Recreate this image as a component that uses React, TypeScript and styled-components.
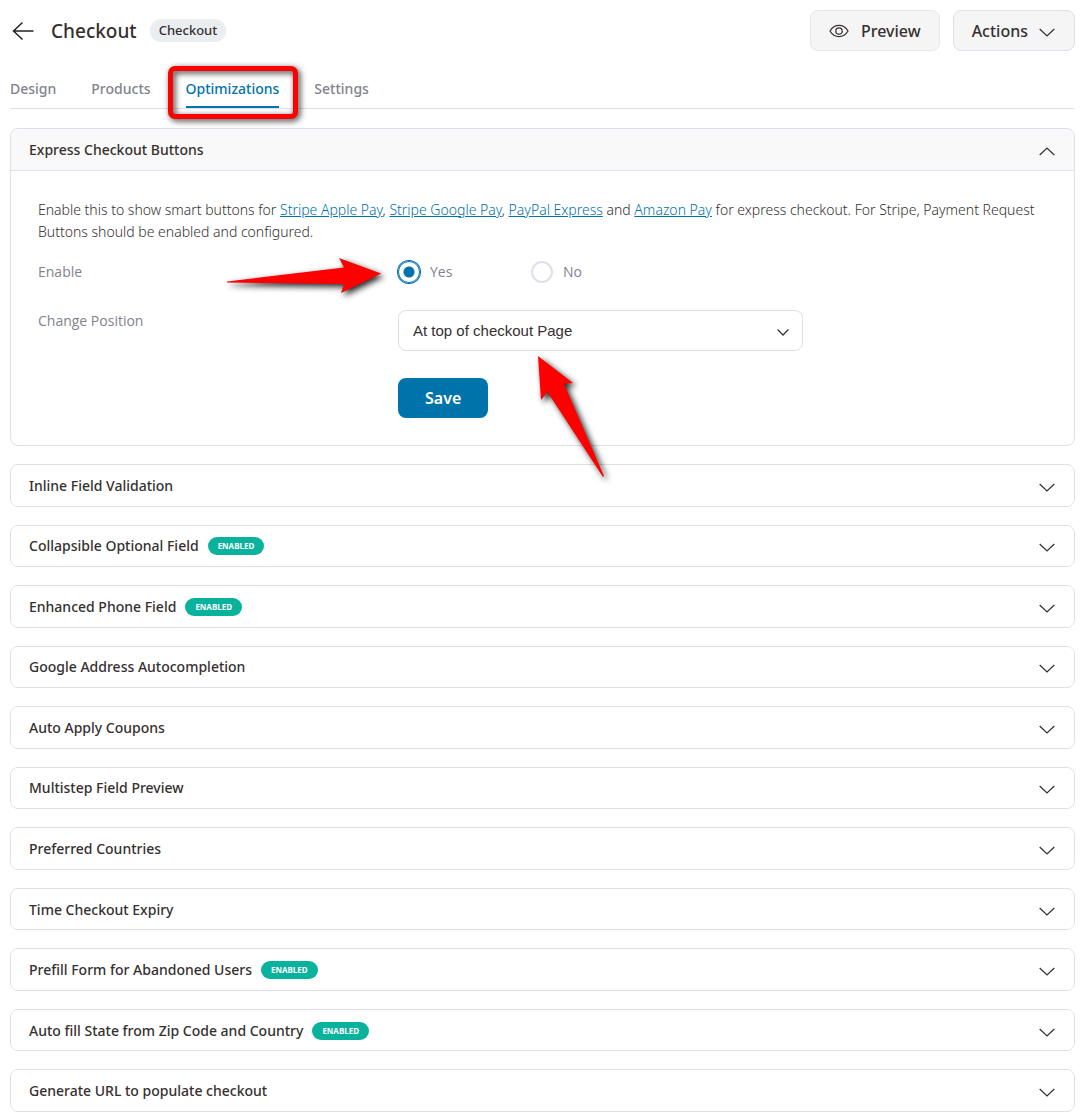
import React, { useState } from "react";
import styled, { createGlobalStyle } from "styled-components";

const c = {
  text: "#353030",
  muted: "#82838e",
  border: "#dedfea",
  blue: "#0073aa",
  green: "#09b29c",
  red: "#ff0000",
};

const GlobalStyle = createGlobalStyle`
  *, *::before, *::after { box-sizing: border-box; }
  body { margin: 0; background: #fff; }
  body, button { font-family: "Noto Sans", "Open Sans", sans-serif; color: ${c.text}; }
`;

const Page = styled.main`
  display: flex;
  flex-direction: column;
  min-height: 100vh;
  padding: 10px 9px 8px 10px;
`;

const Header = styled.header`
  display: flex;
  align-items: center;
  justify-content: space-between;
`;

const TitleGroup = styled.div`
  display: flex;
  align-items: center;
`;

const BackButton = styled.button`
  display: flex;
  padding: 0;
  margin: 0 17px 0 2px;
  border: 0;
  background: none;
`;

const Title = styled.h1`
  margin: 0 13px 0 0;
  font-size: 19px;
  line-height: 26px;
  font-weight: 500;
`;

const Tag = styled.span`
  padding: 0 9px;
  border-radius: 12px;
  background: #eaeef1;
  font-size: 13px;
  line-height: 23px;
  font-weight: 500;
`;

const Toolbar = styled.div`
  display: flex;
  gap: 13px;
`;

const ToolButton = styled.button<{ $tint?: boolean }>`
  display: flex;
  align-items: center;
  gap: ${(p) => (p.$tint ? 11 : 12)}px;
  height: 41px;
  padding: ${(p) => (p.$tint ? "0 19px 0 18px" : "0 18px")};
  border: 1px solid ${(p) => (p.$tint ? c.border : "#e7e7ea")};
  border-radius: 8px;
  background: #f5f5f5;
  font-size: 16px;
  font-weight: 500;
`;

const Tabs = styled.nav`
  display: flex;
  gap: 35px;
  margin: 25px 0 19px;
  border-bottom: 1px solid ${c.border};
`;

const Tab = styled.a<{ $active?: boolean }>`
  position: relative;
  height: 32px;
  border-bottom: 2px solid ${(p) => (p.$active ? c.blue : "transparent")};
  color: ${(p) => (p.$active ? c.blue : c.muted)};
  font-size: 14px;
  line-height: 26px;
  font-weight: 500;
  text-decoration: none;
`;

const Highlight = styled.span`
  position: absolute;
  inset: -10px -19px -13px -18px;
  border: 5px solid ${c.red};
  border-radius: 7px;
  filter: drop-shadow(2px 2px 3px rgba(0, 0, 0, 0.8));
  pointer-events: none;
`;

const Sections = styled.div`
  flex: 1;
  display: grid;
  grid-template-rows: auto;
  grid-auto-rows: minmax(42px, 1fr);
  gap: 18px;
`;

const Panel = styled.section`
  display: flex;
  flex-direction: column;
  border: 1px solid ${c.border};
  border-radius: 8px;
`;

const PanelHeader = styled.button<{ $open?: boolean }>`
  flex: 1 0 auto;
  display: flex;
  align-items: center;
  gap: 9px;
  min-height: ${(p) => (p.$open ? 42 : 40)}px;
  padding: ${(p) => (p.$open ? 0 : 1)}px 19px 0 18px;
  border: 0;
  border-bottom: ${(p) => (p.$open ? `1px solid ${c.border}` : "0")};
  border-radius: ${(p) => (p.$open ? "7px 7px 0 0" : "7px")};
  background: ${(p) => (p.$open ? "#f9f9f9" : "#fff")};
  font-size: 14px;
  line-height: 20px;
  font-weight: 500;
  text-align: left;

  > svg {
    margin-left: auto;
  }
`;

const Badge = styled.span`
  padding: 0 10px;
  border-radius: 9px;
  background: ${c.green};
  color: #fff;
  font-size: 8px;
  line-height: 18px;
  font-weight: 700;
`;

const PanelBody = styled.div`
  padding: 28px 27px 27px;
`;

const Intro = styled.p`
  margin: 0;
  font-size: 14px;
  line-height: 22px;
  font-weight: 300;

  a {
    color: ${c.blue};
  }
`;

const Form = styled.form`
  position: relative;
  display: grid;
  grid-template-columns: 360px minmax(0, 405px);
  margin: 18px 0 0;
  color: ${c.muted};
  font-family: "Open Sans", "Noto Sans", sans-serif;
  font-size: 14px;
  line-height: 22px;
`;

const RadioSet = styled.div`
  display: grid;
  grid-template-columns: 133px 133px;
  margin-bottom: 27px;
`;

const RadioLabel = styled.label`
  display: flex;
  align-items: center;
  gap: 10px;
`;

const Radio = styled.input`
  appearance: none;
  width: 22px;
  height: 22px;
  margin: 0;
  border: 2px solid ${c.border};
  border-radius: 50%;

  &:checked {
    border: 1px solid ${c.blue};
    box-shadow: 0 0 0 1px ${c.blue};
    background: radial-gradient(circle, ${c.blue} 5px, transparent 6px);
  }
`;

const SelectWrap = styled.div`
  position: relative;

  svg {
    position: absolute;
    right: 14px;
    top: 18px;
    pointer-events: none;
  }
`;

const Select = styled.select`
  appearance: none;
  display: block;
  width: 100%;
  height: 41px;
  padding: 0 14px;
  border: 1px solid ${c.border};
  border-radius: 8px;
  background: #fff;
  color: ${c.text};
  font-family: "Liberation Sans", sans-serif;
  font-size: 15px;
`;

const SaveButton = styled.button`
  grid-column: 2;
  justify-self: start;
  height: 40px;
  margin-top: 27px;
  padding: 0 27px;
  border: 0;
  border-radius: 8px;
  background: ${c.blue};
  color: #fff;
  font-size: 16px;
  font-weight: 600;
`;

const Pointer = styled.svg`
  position: absolute;
  overflow: visible;
  fill: ${c.red};
  filter: drop-shadow(3px 3px 3px rgba(0, 0, 0, 0.85));
  pointer-events: none;
`;

const RadioPointer = styled(Pointer)`
  left: 189px;
  top: -3px;
`;

const SelectPointer = styled(Pointer)`
  left: 500px;
  top: 95px;
`;

const Chevron = ({ up }: { up?: boolean }) => (
  <svg width="16" height="12" viewBox="0 0 16 12" fill="none" stroke={c.text} strokeWidth="1.25" aria-hidden="true">
    <path d={up ? "M.7 11 8 4l7.3 7" : "M.7 4 8 11l7.3-7"} />
  </svg>
);

const sections: { name: string; enabled?: boolean }[] = [
  { name: "Inline Field Validation" },
  { name: "Collapsible Optional Field", enabled: true },
  { name: "Enhanced Phone Field", enabled: true },
  { name: "Google Address Autocompletion" },
  { name: "Auto Apply Coupons" },
  { name: "Multistep Field Preview" },
  { name: "Preferred Countries" },
  { name: "Time Checkout Expiry" },
  { name: "Prefill Form for Abandoned Users", enabled: true },
  { name: "Auto fill State from Zip Code and Country", enabled: true },
  { name: "Generate URL to populate checkout" },
];

export default function App() {
  const [enabled, setEnabled] = useState("yes");

  return (
    <>
      <GlobalStyle />
      <Page>
        <Header>
          <TitleGroup>
            <BackButton type="button" aria-label="Back">
              <svg width="22" height="20" viewBox="0 0 22 20" fill="none" stroke="#222" strokeWidth="1.5">
                <path d="M21.5 10H1.5M10.5 1.5 1.5 10l9 8.5" />
              </svg>
            </BackButton>
            <Title>Checkout</Title>
            <Tag>Checkout</Tag>
          </TitleGroup>
          <Toolbar>
            <ToolButton type="button">
              <svg width="20" height="14" viewBox="0 0 20 14" fill="none" stroke={c.text} strokeWidth="1.25" aria-hidden="true">
                <path d="M1 7c2.2-3.7 5.300-5.600 9-5.600S16.800 3.300 19 7c-2.200 3.700-5.300 5.600-9 5.600S3.200 10.700 1 7Z" />
                <circle cx="10" cy="7" r="3.200" />
              </svg>
              Preview
            </ToolButton>
            <ToolButton type="button" $tint>
              Actions
              <Chevron />
            </ToolButton>
          </Toolbar>
        </Header>

        <Tabs>
          <Tab href="#design">Design</Tab>
          <Tab href="#products">Products</Tab>
          <Tab href="#optimizations" $active aria-current="page">
            Optimizations
            <Highlight />
          </Tab>
          <Tab href="#settings">Settings</Tab>
        </Tabs>

        <Sections>
          <Panel>
            <PanelHeader type="button" $open aria-expanded="true">
              Express Checkout Buttons
              <Chevron up />
            </PanelHeader>
            <PanelBody>
              <Intro>
                Enable this to show smart buttons for <a href="#apple-pay">Stripe Apple Pay</a>,{" "}
                <a href="#google-pay">Stripe Google Pay</a>, <a href="#paypal">PayPal Express</a> and{" "}
                <a href="#amazon-pay">Amazon Pay</a> for express checkout. For Stripe, Payment Request Buttons should
                be enabled and configured.
              </Intro>
              <Form onSubmit={(e) => e.preventDefault()}>
                <span id="enable-label">Enable</span>
                <RadioSet role="radiogroup" aria-labelledby="enable-label">
                  <RadioLabel>
                    <Radio type="radio" name="enable" checked={enabled === "yes"} onChange={() => setEnabled("yes")} />
                    Yes
                  </RadioLabel>
                  <RadioLabel>
                    <Radio type="radio" name="enable" checked={enabled === "no"} onChange={() => setEnabled("no")} />
                    No
                  </RadioLabel>
                </RadioSet>
                <label htmlFor="position">Change Position</label>
                <SelectWrap>
                  <Select id="position">
                    <option>At top of checkout Page</option>
                  </Select>
                  <svg width="12" height="8" viewBox="0 0 12 8" fill="none" stroke={c.text} strokeWidth="1.25" aria-hidden="true">
                    <path d="M.6 1.500 6 7l5.400-5.500" />
                  </svg>
                </SelectWrap>
                <SaveButton type="submit">Save</SaveButton>
                <RadioPointer width="155" height="37" viewBox="0 0 155 37" aria-hidden="true">
                  <path d="M0 23.500 117 9.500 112 0l42 15.500L114 35l3-9L0 24.500Z" />
                </RadioPointer>
                <SelectPointer width="67" height="121" viewBox="0 0 67 121" aria-hidden="true">
                  <path d="M0 0 35 27l-9 1 40 92-1 1L9.500 36 3 44Z" />
                </SelectPointer>
              </Form>
            </PanelBody>
          </Panel>
          {sections.map((s) => (
            <Panel key={s.name}>
              <PanelHeader type="button" aria-expanded="false">
                {s.name}
                {s.enabled && <Badge>ENABLED</Badge>}
                <Chevron />
              </PanelHeader>
            </Panel>
          ))}
        </Sections>
      </Page>
    </>
  );
}
